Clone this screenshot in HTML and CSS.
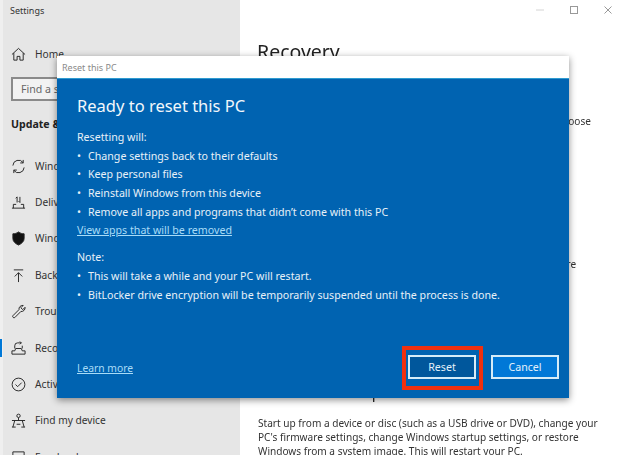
FILE: index.html
```html
<!DOCTYPE html>
<html lang="en">
<head>
<meta charset="utf-8">
<title>Settings</title>
<link rel="stylesheet" href="styles.css">
</head>
<body>
<div class="window">
  <aside class="sidebar">
    <div class="app-title">Settings</div>
    <a class="nav home">
      <svg class="ico" viewBox="0 0 16 16"><path d="M1 8 8 1.500 15 8M3 6.500V14h3.500v-4h3v4H13V6.500"/></svg>
      <span>Home</span>
    </a>
    <div class="search">Find a setting</div>
    <div class="section">Update &amp; Security</div>
    <nav class="nav-list">
      <a class="nav">
        <svg class="ico" viewBox="0 0 16 16"><path d="M2 7A6 6 0 0 1 13 4M14 9A6 6 0 0 1 3 12M13 1v3.200H9.800M3 15v-3.200h3.200"/></svg>
        <span>Windows Update</span>
      </a>
      <a class="nav">
        <svg class="ico" viewBox="0 0 16 16"><path d="M1 14h14M2.500 14v-4h3M13.500 14v-4h-3M6.500 2v6M6.500 2 5 3.500M9.500 2v6M9.500 8 8 6.500"/></svg>
        <span>Delivery Optimization</span>
      </a>
      <a class="nav">
        <svg class="ico solid" viewBox="0 0 16 16"><path d="M8 1c2 1.500 4 2 6 2v5c0 3-2.500 5.500-6 7-3.500-1.500-6-4-6-7V3c2 0 4-.5 6-2Z"/></svg>
        <span>Windows Security</span>
      </a>
      <a class="nav">
        <svg class="ico" viewBox="0 0 16 16"><path d="M3 2h10M8 15V5M4 9l4-4 4 4"/></svg>
        <span>Backup</span>
      </a>
      <a class="nav">
        <svg class="ico" viewBox="0 0 16 16"><path d="M2 12.500 8.500 6A4 4 0 0 1 13 1.500L10.500 4l2 2L15 3.500A4 4 0 0 1 10.500 8L4 14.500c-1 1-3-1-2-2Z"/></svg>
        <span>Troubleshoot</span>
      </a>
      <a class="nav active">
        <svg class="ico" viewBox="0 0 16 16"><path d="M4 8V5A3 3 0 0 1 7 2h4M9.500.5 11 2 9.500 3.500M12 5v3M1 14h14v-3.500h-3L11 8H5l-1 2.500H1Z"/></svg>
        <span>Recovery</span>
      </a>
      <a class="nav">
        <svg class="ico" viewBox="0 0 16 16"><circle cx="8" cy="8" r="6.800"/><path d="m4.800 8 2.300 2.300 4.300-4.300"/></svg>
        <span>Activation</span>
      </a>
      <a class="nav">
        <svg class="ico" viewBox="0 0 16 16"><circle cx="8" cy="3" r="1.800"/><path d="M1 8h14M8 5v3M4 8l-2 7M12 8l2 7M1 15h4M11 15h4M6 12h4"/></svg>
        <span>Find my device</span>
      </a>
      <a class="nav">
        <svg class="ico" viewBox="0 0 16 16"><path d="M2 2h12v9H6l-3 3v-3H2Z"/></svg>
        <span>For developers</span>
      </a>
    </nav>
  </aside>

  <main class="main">
    <div class="controls">
      <svg class="ctl faint" viewBox="0 0 8 8"><path d="M0 4h8"/></svg>
      <svg class="ctl mid" viewBox="0 0 8 8"><rect x=".5" y=".5" width="7" height="7"/></svg>
      <svg class="ctl mid" viewBox="0 0 8 8"><path d="m.5.500 7 7M7.500.500l-7 7"/></svg>
    </div>
    <h1 class="page-title">Recovery</h1>
    <p class="copy first">If your PC isn't running well, resetting it may help. This lets you choose</p>
    <p class="copy second">Resetting your PC can take a while. If you can, try other fixes before</p>
    <h2 class="sub">Advanced startup</h2>
    <p class="copy last">Start up from a device or disc (such as a USB drive or DVD), change your PC's firmware settings, change Windows startup settings, or restore Windows from a system image. This will restart your PC.</p>
  </main>
</div>

<section class="dialog">
  <header class="dialog-bar">Reset this PC</header>
  <div class="dialog-body">
    <h2 class="dialog-title">Ready to reset this PC</h2>
    <p class="line">Resetting will:</p>
    <ul class="bullets">
      <li>Change settings back to their defaults</li>
      <li>Keep personal files</li>
      <li>Reinstall Windows from this device</li>
      <li>Remove all apps and programs that didn’t come with this PC</li>
    </ul>
    <a class="link line">View apps that will be removed</a>
    <p class="line note">Note:</p>
    <ul class="bullets">
      <li>This will take a while and your PC will restart.</li>
      <li>BitLocker drive encryption will be temporarily suspended until the process is done.</li>
    </ul>
    <footer class="dialog-foot">
      <a class="link learn">Learn more</a>
      <div class="buttons">
        <button class="btn reset">Reset<span class="mark"></span></button>
        <button class="btn cancel">Cancel</button>
      </div>
    </footer>
  </div>
</section>
</body>
</html>
```

FILE: styles.css
```css
* { box-sizing: border-box; }
html, body { margin: 0; padding: 0; }
body {
  position: relative;
  width: 621px;
  height: 455px;
  overflow: hidden;
  background: #fff;
  color: #222;
  font: 10.650px/15px "Noto Sans", "Open Sans", sans-serif;
  filter: blur(0.35px);
}
p, h1, h2, ul { margin: 0; padding: 0; font-weight: 400; }

.window { display: flex; height: 455px; overflow: hidden; }

.sidebar {
  flex: 0 0 240px;
  background: #e6e6e6;
  border-left: 3px solid #efefef;
  height: 480px;
  font-size: 10.200px;
}
.app-title { padding: 3px 0 0 7px; height: 38px; font-size: 9px; color: #333; }
.nav {
  display: flex;
  align-items: center;
  height: 36.400px;
  gap: 9px;
  padding-left: 8px;
  position: relative;
  color: #333;
  white-space: nowrap;
}
.home { height: 32px; }
.ico {
  flex: none;
  width: 15px;
  height: 15px;
  fill: none;
  stroke: #222;
  stroke-width: 1;
}
.ico.solid { fill: #111; }
.search {
  margin: 7px 0 0 8px;
  width: 190px;
  height: 24px;
  padding: 3px 0 0 8px;
  border: 2px solid #8a8a8a;
  background: #f2f2f2;
  color: #666;
  font-size: 10.600px;
}
.section { margin: 16px 0 0 8px; font-weight: 700; color: #222; height: 15px; font-size: 10.600px; }
.nav-list { margin-top: 16px; }
.active::before {
  content: "";
  position: absolute;
  left: -3px;
  top: 9px;
  width: 2px;
  height: 18px;
  background: #0078d7;
}

.main { flex: 1; min-width: 0; padding-left: 17px; position: relative; }
.controls { display: flex; justify-content: flex-end; gap: 26px; padding: 6px 9px 0 0; height: 38px; }
.ctl { width: 8px; height: 8px; fill: none; stroke: #aaa; stroke-width: 1; }
.ctl.mid { stroke: #999; }
.ctl.faint { stroke: #d4d4d4; }
.page-title { font-size: 19.500px; line-height: 28px; color: #222; }
.copy { width: 340px; color: #333; font-size: 10.100px; line-height: 14px; }
.first { margin-top: 48px; white-space: nowrap; }
.second { margin-top: 129px; white-space: nowrap; }
.sub { margin-top: 111px; font-size: 15px; line-height: 20px; }
.last { margin: 14px 0 0 1px; }

.dialog {
  position: absolute;
  left: 57px;
  top: 56px;
  width: 512px;
  height: 342px;
  display: flex;
  flex-direction: column;
  box-shadow: 0 2px 7px rgba(0, 0, 0, .45);
}
.dialog-bar {
  flex: none;
  height: 23px;
  padding: 4px 0 0 5px;
  background: #fff;
  border-bottom: 1px solid #2f9bd0;
  font-size: 9px;
  color: #8a8a8a;
}
.dialog-body {
  flex: 1;
  display: flex;
  flex-direction: column;
  padding: 15px 10px 19px 20px;
  background: #0063b1;
  color: #e8f1f8;
}
.dialog-title { font-size: 16.500px; line-height: 24px; color: #f2f7fb; margin-bottom: 10px; }
.line { line-height: 18.700px; height: 18.700px; display: block; }
.note { margin-top: 8px; }
.bullets { list-style: none; }
.bullets li { display: flex; height: 18.700px; line-height: 18.700px; white-space: nowrap; }
.bullets li::before { content: "•"; width: 11px; flex: none; }
.link { color: #a9dcf7; text-decoration: underline; }
.learn { padding-top: 2px; font-size: 10.300px; }
.dialog-foot {
  margin-top: auto;
  display: flex;
  align-items: center;
  justify-content: space-between;
}
.buttons { display: flex; gap: 15px; }
.btn {
  position: relative;
  width: 68px;
  height: 24px;
  padding: 0;
  border: 2px solid #d5ecf8;
  color: #e4f1fa;
  font: inherit;
}
.reset { background: #00579c; }
.cancel { background: #0078d7; }
.mark {
  position: absolute;
  left: -8px;
  right: -9px;
  top: -11px;
  bottom: -13px;
  border: 4px solid #f0300f;
}
```
